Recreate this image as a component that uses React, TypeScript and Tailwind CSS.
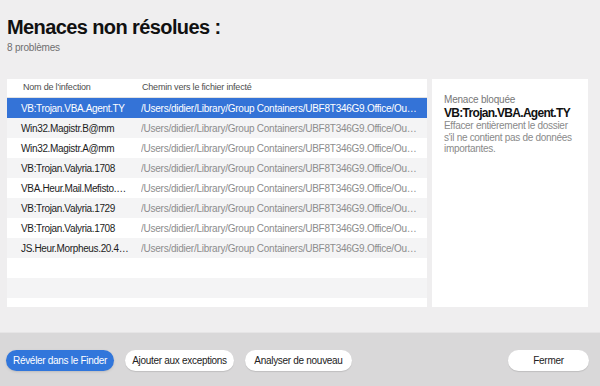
import React from 'react';

const threats = [
  'VB:Trojan.VBA.Agent.TY',
  'Win32.Magistr.B@mm',
  'Win32.Magistr.A@mm',
  'VB:Trojan.Valyria.1708',
  'VBA.Heur.Mail.Mefisto.6040',
  'VB:Trojan.Valyria.1729',
  'VB:Trojan.Valyria.1708',
  'JS.Heur.Morpheus.20.4711',
];

const path = '/Users/didier/Library/Group Containers/UBF8T346G9.Office/Outlook/Outlook 15 Profiles/Main Profile/Data';

const App: React.FC = () => {
  const rows = [...threats, '', '', ''];

  return (
    <div className="w-[600px] h-[386px] bg-[#efeeef] flex flex-col overflow-hidden font-['Liberation_Sans',Arial,sans-serif]">
      <div className="px-[7px] pt-[15px]">
        <h1 className="text-[20px] leading-[24px] font-bold tracking-[-0.6px] text-[#111]">Menaces non résolues :</h1>
        <p className="mt-[3px] text-[10px] leading-[12px] tracking-[-0.2px] text-[#6f6f6f]">8 problèmes</p>
      </div>

      <div className="flex px-[7px] mt-[25px] h-[228px]">
        <div className="w-[420px] bg-white overflow-hidden flex flex-col">
          <div className="flex h-[19px] shrink-0 items-center border-b border-[#e2e2e2] text-[9px] tracking-[-0.2px] text-[#4d4d4d]">
            <div className="w-[134px] pl-[16px]">Nom de l'infection</div>
            <div className="flex-1 pl-[1px]">Chemin vers le fichier infecté</div>
          </div>
          {rows.map((name, i) => {
            const selected = i === 0;
            const bg = selected ? 'bg-[#3473d7]' : i % 2 === 1 ? 'bg-[#f4f4f5]' : 'bg-white';
            return (
              <div key={i} className={`flex h-[20px] shrink-0 items-center text-[10px] ${bg}`}>
                {name && (
                  <>
                    <div className={`w-[134px] pl-[14px] pr-[12px] truncate tracking-[-0.35px] ${selected ? 'text-white' : 'text-[#1c1c1c]'}`}>
                      {name}
                    </div>
                    <div className={`w-[276px] truncate tracking-[-0.25px] ${selected ? 'text-white' : 'text-[#8d8d8d]'}`}>{path}</div>
                  </>
                )}
              </div>
            );
          })}
        </div>

        <div className="ml-[5px] w-[156px] bg-white pl-[12px] pr-[8px] pt-[15px]">
          <p className="text-[10px] leading-[12px] tracking-[-0.2px] text-[#777]">Menace bloquée</p>
          <p className="text-[12px] leading-[14px] font-bold tracking-[-0.7px] text-[#111]">VB:Trojan.VBA.Agent.TY</p>
          <p className="text-[10px] leading-[11.5px] tracking-[-0.3px] text-[#8a8a8a]">
            Effacer entièrement le dossier s'il ne contient pas de données importantes.
          </p>
        </div>
      </div>

      <div className="mt-auto h-[54px] bg-[#d9d8d9] border-t border-[#e6e5e6] flex items-start pt-[17px] px-[6px]">
        <button className="w-[108px] h-[21px] rounded-full bg-[#3176db] text-white text-[10px] tracking-[-0.3px] shadow-sm">
          Révéler dans le Finder
        </button>
        <button className="ml-[11px] w-[109px] h-[21px] rounded-full bg-white text-[#222] text-[10px] tracking-[-0.3px] shadow-[0_1px_1px_rgba(0,0,0,0.12)]">
          Ajouter aux exceptions
        </button>
        <button className="ml-[11px] w-[107px] h-[21px] rounded-full bg-white text-[#222] text-[10px] tracking-[-0.3px] shadow-[0_1px_1px_rgba(0,0,0,0.12)]">
          Analyser de nouveau
        </button>
        <button className="ml-auto mr-[5px] w-[81px] h-[21px] rounded-full bg-white text-[#222] text-[10px] tracking-[-0.3px] shadow-[0_1px_1px_rgba(0,0,0,0.12)]">
          Fermer
        </button>
      </div>
    </div>
  );
};

export default App;
